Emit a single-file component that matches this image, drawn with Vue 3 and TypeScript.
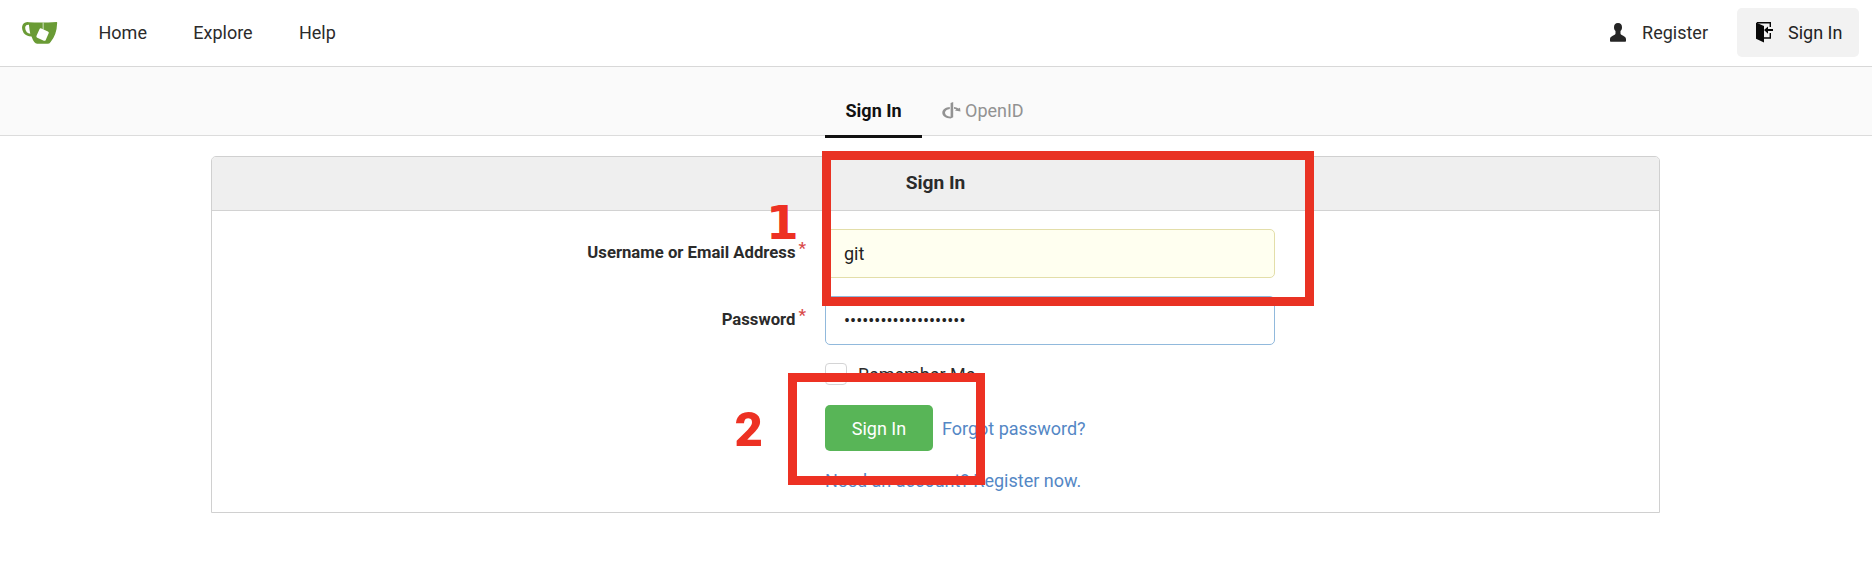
<script setup lang="ts">
import { ref } from 'vue'

const navLinks: string[] = ['Home', 'Explore', 'Help']
const userName = ref('git')
const password = ref('xxxxxxxxxxxxxxxxxxxx')
const remember = ref(false)
</script>

<template>
  <div class="page">
    <header class="navbar">
      <a class="brand">
        <svg width="37" height="24" viewBox="0 0 38 25">
          <path fill="#6a9b35" fill-rule="evenodd" d="M8 1.2Q20 2.2 36.8 1Q37.5 1.1 37.4 2.2Q37 14.5 30.6 21.8Q29.4 23.8 27.3 23.8H16.5Q13.3 23.6 10.7 16.1Q5.3 16 2.5 12.4Q-.3 7.8 1.5 4Q3.4.7 8 1.2ZM8 4Q4.8 3.6 4.2 6Q3.7 9.4 5.8 11.7Q7.2 13.2 9.4 13.3Q8.5 9.6 8 4Z"/>
          <path stroke="#d7e7c8" stroke-width="1" d="M22.8 1.5V9"/>
          <rect x="17" y="8.9" width="10.5" height="10.5" rx="1.5" fill="#fff" transform="rotate(24 22.2 14.1)"/>
        </svg>
      </a>
      <nav class="links"><a v-for="link in navLinks" :key="link">{{ link }}</a></nav>
      <div class="account">
        <a class="register">
          <svg width="16" height="19" viewBox="0 0 16 19"><path fill="#252525" d="M8 0C5.2 0 4 1.9 4 4.2C4 6 4.5 7 5.5 8.1V10.4C5.5 12.4 0 12.7 0 16V18Q0 18.7.8 18.7H15.2Q16 18.7 16 18V16C16 12.7 10.5 12.4 10.5 10.4V8.1C11.5 7 12 6 12 4.2C12 1.9 10.8 0 8 0Z"/></svg>
          <span>Register</span>
        </a>
        <a class="login">
          <svg width="18" height="21" viewBox="0 0 18 21"><path fill="#080808" d="M0 .5L8 4V20.5L0 16.8Z"/><path fill="none" stroke="#080808" stroke-width="1.4" d="M1 .8H14.3V5M14.3 11V16H8"/><path fill="#080808" d="M8 8L12 4.4V7H17V9.1H12V11.7Z"/></svg>
          <span>Sign In</span>
        </a>
      </div>
    </header>

    <div class="tabs">
      <a class="tab active">Sign In</a>
      <a class="tab">
        <svg width="19" height="17" viewBox="0 0 19 17"><path fill="#929292" d="M8.6 1L11.2 0V15.2L8.6 16.5C3.8 16.2.3 13.9.3 10.7C.3 7.5 3.7 5.4 7.8 5.1V6.9C4.9 7.4 3 8.7 3 10.7C3 12.8 5.3 14.3 8.6 14.7ZM12 5.1C13.7 5.3 15.2 5.8 16.5 6.5L18 5.7L18.5 9.5L12.9 8.4L14.4 7.6C13.7 7.2 12.9 7 12 6.8Z"/></svg>
        <span>OpenID</span>
      </a>
    </div>

    <main class="card">
      <h4>Sign In</h4>
      <form @submit.prevent>
        <label class="caption" for="user">Username or Email Address<sup>*</sup></label>
        <input id="user" v-model="userName" class="field filled" type="text">
        <label class="caption" for="pass">Password<sup>*</sup></label>
        <input id="pass" v-model="password" class="field focused" type="password">
        <label class="remember"><input v-model="remember" type="checkbox"><span>Remember Me</span></label>
        <div class="actions"><button>Sign In</button><a>Forgot password?</a></div>
        <a class="signup">Need an account? Register now.</a>
      </form>
    </main>

    <div class="mark box-one"></div>
    <div class="mark box-two"></div>
    <b class="step one">1</b>
    <b class="step two">2</b>
  </div>
</template>

<style>
body { margin: 0; background: #fff; }
</style>

<style scoped>
.page { position: relative; width: 1876px; height: 570px; overflow: hidden; font: 18px/26px Roboto, sans-serif; color: #2b2b2b; background: #fff; }
.page * { box-sizing: border-box; }
svg { display: block; flex: none; }
.navbar { display: flex; width: 1872px; height: 67px; align-items: center; border-bottom: 1px solid #d8d8d8; padding: 0 13px 0 21px; }
.brand { width: 77.5px; }
.links { display: flex; gap: 46.3px; }
.account { display: flex; margin-left: auto; align-items: center; }
.register { display: flex; align-items: center; gap: 16px; margin-right: 29px; }
.register svg { margin-top: -2px; }
.login { display: flex; align-items: center; gap: 14px; height: 49px; width: 122px; margin-top: -2px; padding-left: 19px; border-radius: 5px; background: #f2f2f2; color: #222; }
.login span { padding-top: 1px; }
.tabs { display: flex; width: 1872px; height: 69px; padding-left: 825px; border-bottom: 1px solid #dcdcdc; background: #fafafa; }
.tab { display: flex; align-items: center; height: 71px; padding: 17px 20px 0; color: #929292; gap: 4px; }
.tab svg { margin-top: -2px; }
.tab.active { width: 97px; border-bottom: 3px solid #111; color: #111; font-weight: 700; padding: 20px 0 0 20.5px; }
.card { width: 1449px; height: 357px; margin: 20px 0 0 211px; border: 1px solid #d0d0d0; border-radius: 5px 5px 0 0; }
h4 { height: 54px; margin: 0; border-bottom: 1px solid #d2d2d2; border-radius: 4px 4px 0 0; background: #efefef; text-align: center; font-size: 19.2px; line-height: 52px; font-weight: 700; }
form { display: grid; grid-template-columns: 595px 450px; grid-template-rows: 49px 49px 22px 46px 24px; column-gap: 18px; row-gap: 18px; padding-top: 18px; }
.caption { text-align: right; font-size: 16.7px; font-weight: 700; line-height: 48px; white-space: nowrap; }
sup { color: #d94a4a; font-size: 17px; font-weight: 500; line-height: 0; vertical-align: 4px; margin-left: 3px; padding-right: 1px; }
.field { width: 450px; height: 49px; margin: 0; padding: 0 18px; border: 1px solid #ddd; border-radius: 5px; outline: none; font: 18px Roboto, sans-serif; color: #222; }
.filled { background: #fffff0; border-color: #e3dea9; }
.focused { border-color: #91b9dc; }
.remember, .actions, .signup { grid-column: 2; }
.remember { display: flex; align-items: center; gap: 11px; margin-top: 0; white-space: nowrap; }
.remember span { padding-top: 1px; }
.remember input { appearance: none; width: 22px; height: 22px; margin: 0; border: 1px solid #d4d4d5; border-radius: 4px; background: #fff; }
.actions { display: flex; align-items: center; gap: 9px; margin-top: 2px; color: #5487c5; }
.actions a { padding-top: 2px; }
.actions, .actions button { height: 46px; }
button { width: 108px; padding: 1px 0 0; border: 0; border-radius: 5px; background: #58b557; color: #fff; font: 18px Roboto, sans-serif; }
.signup { color: #5487c5; line-height: 24px; padding-top: 2px; }
.mark { position: absolute; border: 9px solid #e93223; }
.box-one { left: 822px; top: 151px; width: 492px; height: 155px; }
.box-two { left: 788px; top: 373px; width: 197px; height: 112px; border-color: #ed3123; }
.step { position: absolute; color: #ed3123; line-height: 47px; }
.one { left: 766px; top: 199px; font-family: "DejaVu Sans", sans-serif; font-size: 47px; font-weight: 700; }
.two { left: 734.5px; top: 406px; font-family: Roboto, sans-serif; font-size: 49px; font-weight: 900; }
</style>
